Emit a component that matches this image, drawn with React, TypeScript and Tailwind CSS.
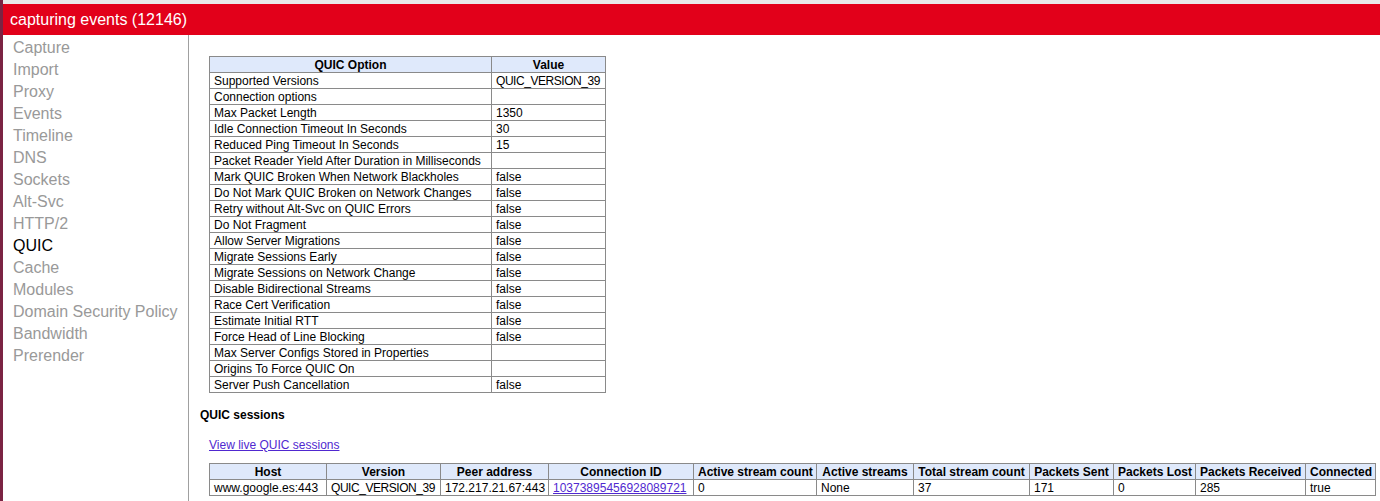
import React from "react";

const navItems = [
  "Capture",
  "Import",
  "Proxy",
  "Events",
  "Timeline",
  "DNS",
  "Sockets",
  "Alt-Svc",
  "HTTP/2",
  "QUIC",
  "Cache",
  "Modules",
  "Domain Security Policy",
  "Bandwidth",
  "Prerender",
];

const options: [string, string][] = [
  ["Supported Versions", "QUIC_VERSION_39"],
  ["Connection options", ""],
  ["Max Packet Length", "1350"],
  ["Idle Connection Timeout In Seconds", "30"],
  ["Reduced Ping Timeout In Seconds", "15"],
  ["Packet Reader Yield After Duration in Milliseconds", ""],
  ["Mark QUIC Broken When Network Blackholes", "false"],
  ["Do Not Mark QUIC Broken on Network Changes", "false"],
  ["Retry without Alt-Svc on QUIC Errors", "false"],
  ["Do Not Fragment", "false"],
  ["Allow Server Migrations", "false"],
  ["Migrate Sessions Early", "false"],
  ["Migrate Sessions on Network Change", "false"],
  ["Disable Bidirectional Streams", "false"],
  ["Race Cert Verification", "false"],
  ["Estimate Initial RTT", "false"],
  ["Force Head of Line Blocking", "false"],
  ["Max Server Configs Stored in Properties", ""],
  ["Origins To Force QUIC On", ""],
  ["Server Push Cancellation", "false"],
];

const sessCols: { h: string; w: number; v: string; link?: boolean }[] = [
  { h: "Host", w: 117, v: "www.google.es:443" },
  { h: "Version", w: 114, v: "QUIC_VERSION_39" },
  { h: "Peer address", w: 108, v: "172.217.21.67:443" },
  { h: "Connection ID", w: 145, v: "10373895456928089721", link: true },
  { h: "Active stream count", w: 123, v: "0" },
  { h: "Active streams", w: 97, v: "None" },
  { h: "Total stream count", w: 116, v: "37" },
  { h: "Packets Sent", w: 84, v: "171" },
  { h: "Packets Lost", w: 82, v: "0" },
  { h: "Packets Received", w: 110, v: "285" },
  { h: "Connected", w: 70, v: "true" },
];

const cell = "border border-[#8a8a8a] px-[4px] h-[16px] leading-[14px] whitespace-nowrap p-0";

function Val({ v }: { v: string }) {
  if (v === "QUIC_VERSION_39") {
    return <span className="tracking-[-0.45px]">{v}</span>;
  }
  return <>{v}</>;
}

export default function App() {
  return (
    <div
      className="flex w-[1380px] h-[501px] overflow-hidden bg-white text-black"
      style={{ fontFamily: '"Liberation Sans", Arial, sans-serif' }}
    >
      <div className="w-[3px] shrink-0 bg-[#7b2343]" />
      <div className="flex flex-col flex-1 min-w-0">
        <div className="h-[4px] bg-[#e9e9e9] shrink-0" />
        <div className="h-[31px] shrink-0 bg-[#e2001a] text-white text-[16px] leading-[31px] pl-[7px]">
          capturing events (12146)
        </div>
        <div className="flex flex-1 min-h-0">
          <div className="w-[186px] shrink-0 border-r border-[#a0a0a0] pt-[2px] pl-[10px]">
            {navItems.map((n) => (
              <div
                key={n}
                className={`text-[16px] leading-[22px] ${n === "QUIC" ? "text-black" : "text-[#999999]"}`}
              >
                {n}
              </div>
            ))}
          </div>
          <div className="flex-1 pl-[11px] pt-[21px] text-[12px]">
            <table className="border-collapse table-fixed w-[397px] ml-[9px] text-[12px]">
              <colgroup>
                <col className="w-[282px]" />
                <col className="w-[114px]" />
              </colgroup>
              <thead>
                <tr className="bg-[#dfe9fb]">
                  <th className={`${cell} font-bold text-center`}>QUIC Option</th>
                  <th className={`${cell} font-bold text-center`}>Value</th>
                </tr>
              </thead>
              <tbody>
                {options.map(([k, v]) => (
                  <tr key={k}>
                    <td className={`${cell} text-left`}>{k}</td>
                    <td className={`${cell} text-left`}>
                      <Val v={v} />
                    </td>
                  </tr>
                ))}
              </tbody>
            </table>
            <div className="font-bold text-[12px] leading-[14px] mt-[15px]">QUIC sessions</div>
            <div className="ml-[9px] mt-[16px] leading-[14px]">
              <a href="#" className="text-[#5028d0] underline">
                View live QUIC sessions
              </a>
            </div>
            <table className="border-collapse table-fixed w-[1167px] ml-[9px] mt-[11px] text-[12px]">
              <colgroup>
                {sessCols.map((c) => (
                  <col key={c.h} style={{ width: c.w }} />
                ))}
              </colgroup>
              <thead>
                <tr className="bg-[#dfe9fb]">
                  {sessCols.map((c) => (
                    <th key={c.h} className={`${cell} font-bold text-center`}>
                      {c.h}
                    </th>
                  ))}
                </tr>
              </thead>
              <tbody>
                <tr>
                  {sessCols.map((c) => (
                    <td key={c.h} className={`${cell} text-left`}>
                      {c.link ? (
                        <a href="#" className="text-[#5028d0] underline">
                          {c.v}
                        </a>
                      ) : (
                        <Val v={c.v} />
                      )}
                    </td>
                  ))}
                </tr>
              </tbody>
            </table>
          </div>
        </div>
      </div>
    </div>
  );
}
